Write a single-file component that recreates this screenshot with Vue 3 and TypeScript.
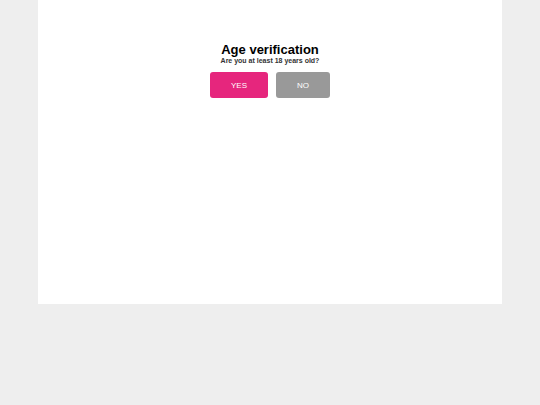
<script setup lang="ts">
import { ref } from 'vue'

const answer = ref<boolean | null>(null)
</script>

<template>
  <main class="page">
    <section class="card" aria-labelledby="title">
      <h1 id="title" class="title">Age verification</h1>
      <p class="question">Are you at least 18 years old?</p>
      <div class="actions">
        <button type="button" class="btn yes" @click="answer = true">YES</button>
        <button type="button" class="btn no" @click="answer = false">NO</button>
      </div>
    </section>
  </main>
</template>

<style>
body {
  background: #eeeeee;
}
</style>

<style scoped>
.page {
  padding: 0 7%;
  font-family: "Liberation Sans", Arial, sans-serif;
}

.card {
  box-sizing: border-box;
  min-height: 75vh;
  padding: 43px 16px;
  background: #ffffff;
  text-align: center;
}

.title {
  margin: 0;
  font-size: 13px;
  line-height: 14px;
  color: #000000;
}

.question {
  margin: 0;
  font-size: 7px;
  font-weight: bold;
  line-height: 8px;
  color: #333333;
}

.actions {
  display: flex;
  justify-content: center;
  gap: 8px;
  margin-top: 7px;
}

.btn {
  margin: 0;
  padding: 9px 21px 7px;
  border: 0;
  border-radius: 3px;
  font-family: inherit;
  font-size: 8px;
  line-height: 10px;
  color: #ffffff;
  cursor: pointer;
}

.yes {
  background: #e6267d;
}

.no {
  background: #999999;
}
</style>
